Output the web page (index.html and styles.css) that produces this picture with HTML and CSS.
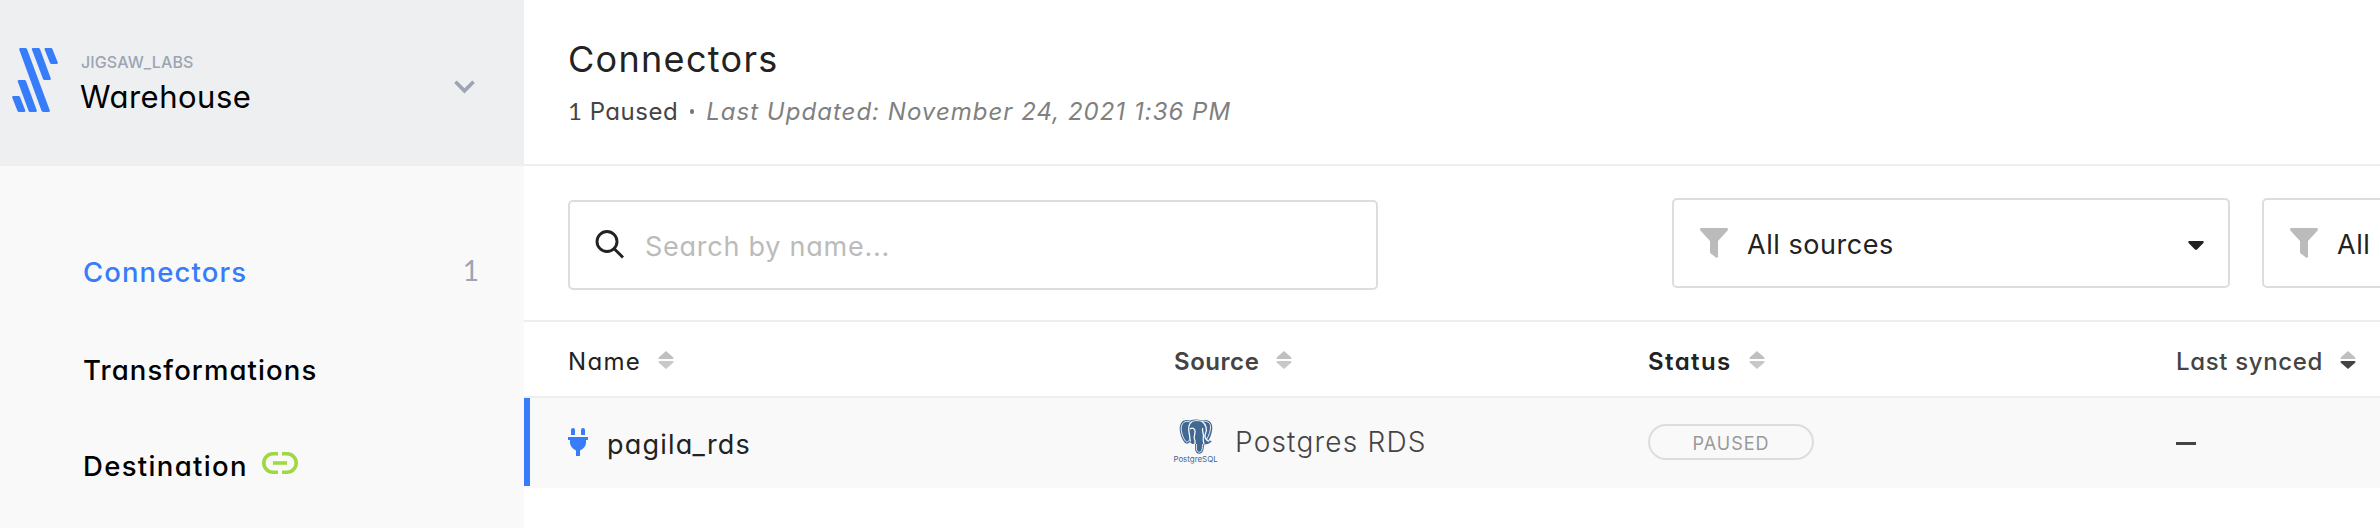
FILE: index.html
```html
<!DOCTYPE html>
<html lang="en">
<head>
<meta charset="utf-8">
<title>Connectors</title>
<link rel="stylesheet" href="styles.css">
</head>
<body>
<svg class="defs" width="0" height="0">
  <symbol id="sort" viewBox="0 0 16 18"><path class="up" d="M8 0 L15.4 6.4 Q16 8 14.5 8 H1.5 Q0 8 .6 6.4Z"/><path class="down" d="M8 18 L15.4 11.600 Q16 10 14.5 10 H1.5 Q0 10 .6 11.600Z"/></symbol>
  <symbol id="funnel" viewBox="0 0 28 30"><path d="M1 0H27Q28.6 .8 27.6 2.4L18 13V29Q17.4 30.4 16 29.4L10.6 25.4Q10 25 10 24V13L.4 2.4Q-.6 .8 1 0Z"/></symbol>
</svg>
<div class="app">
  <aside class="sidebar">
    <div class="account">
      <svg class="logo" viewBox="0 0 46 64"><path d="M8 0H14L15 1L38 63L37 64H31L29.6 63L7 1Z M20.5 0H27L28 1L39 31L38 32H32L31 31L19.7 1Z M33 0H39.5L40.4 1L46 15L45 16H39L38 15L32.4 1Z M6.5 32H13L14 33L25 63L24 64H17.5L16.6 63L5.6 33Z M1 48H7L8 49L13.5 63L12.5 64H6.5L5.5 63L0 49Z"/></svg>
      <div class="account-text">
        <div class="org">JIGSAW_LABS</div>
        <div class="dest">Warehouse</div>
      </div>
      <svg class="chevron" viewBox="0 0 22 14"><path d="M1.5 1.5L11 11L20.5 1.5"/></svg>
    </div>
    <nav class="nav">
      <a class="nav-item active"><span>Connectors</span><span class="count">1</span></a>
      <a class="nav-item"><span>Transformations</span></a>
      <a class="nav-item last"><span>Destination</span>
        <svg class="link" viewBox="0 0 36 22"><path d="M16 1.8H11A9.2 9.2 0 0 0 11 20.2H16M20 1.8H25A9.2 9.2 0 0 1 25 20.2H20M11 11H25"/></svg>
      </a>
    </nav>
  </aside>
  <main class="main">
    <header class="head">
      <h1>Connectors</h1>
      <div class="sub"><span class="paused-count"><span class="one">1</span> Paused</span><i class="dot"></i><em>Last Updated: November 24, 2021 1:36 PM</em></div>
    </header>
    <div class="toolbar">
      <div class="search">
        <svg class="glass" viewBox="0 0 29 29"><circle cx="12" cy="11.5" r="10"/><path d="M19 18.5L28 27.500"/></svg>
        <span>Search by name...</span>
      </div>
      <div class="select"><svg class="funnel"><use href="#funnel"/></svg><span>All sources</span><svg class="caret" viewBox="0 0 16 9"><path d="M1 0H15Q16.5 .6 15.4 2L9 8.5Q8 9.4 7 8.5L.6 2Q-.5 .6 1 0Z"/></svg></div>
      <div class="select second"><svg class="funnel"><use href="#funnel"/></svg><span>All</span></div>
    </div>
    <div class="row thead">
      <div class="c h1c"><span>Name</span><svg class="sort"><use href="#sort"/></svg></div>
      <div class="c h2c"><span>Source</span><svg class="sort"><use href="#sort"/></svg></div>
      <div class="c h3c"><span>Status</span><svg class="sort"><use href="#sort"/></svg></div>
      <div class="c h4c"><span>Last synced</span><svg class="sort sorted"><use href="#sort"/></svg></div>
    </div>
    <div class="row item">
      <div class="c name"><svg class="plug" viewBox="0 0 20 28"><path d="M3 7V2Q3 0 5 0T7 2V7ZM13 7V2Q13 0 15 0T17 2V7ZM0 9H20V12H18V15Q17.6 20 12 22.4V28H8V22.4Q2.4 20 2 15V12H0Z"/></svg><span>pagila_rds</span></div>
      <div class="c source">
        <div class="pg">
          <svg viewBox="0 0 34 36">
            <path class="body" d="M11 1.500C5 -.500 .500 3 .700 10C1 16 4 23 7 24.500C9 25 10 24 11 23L12 24C13 25.500 15 25 16 24.500V30C16.500 34 19 35.500 21.500 34.500C24.500 33.500 25 29 25 25.500C28 25.500 31 24.500 33 22L29.500 21.500C32 17 34 11 33 6C31.500 1.500 27 0 23 1.500C19 0 15 0 11 1.500Z"/>
            <path class="crease" d="M13 2.500C9 5 9.500 12 10.500 16C11 19 10.500 20 11.500 22.500M23 2.500C27 5 29 11 26 16C25.500 19 26.500 20.500 30 22.500M11 10C13 8.500 16 9 16 12C16.500 16 13.500 18 16 22V25M24 9C22.500 10.500 24 13 24.500 16C24 19 24 22 25 25"/>
            <path class="rim" d="M11 3C6 1 2 4 2.200 10C2.500 15 5 21.500 7.500 23C8.500 23 9.500 22 10.500 21M13 2.500C16 1.300 20 1.300 23 2.500C27 1.500 30.500 3 31.500 6.500C32 11 30 16.500 27.500 20.500M17.400 25V30C18 33 20 33.700 21.500 33C23.200 32 23.600 28 23.700 25"/>
          </svg>
          <span>PostgreSQL</span>
        </div>
        <span class="source-name">Postgres RDS</span>
      </div>
      <div class="c status"><span class="pill">PAUSED</span></div>
      <div class="c synced"><i class="dash"></i></div>
    </div>
  </main>
</div>
</body>
</html>
```
FILE: styles.css
```css
* { box-sizing: border-box; }
body {
  margin: 0;
  background: #fff;
  color: #222;
  font-family: Inter, Lato, sans-serif;
  font-feature-settings: "cv11" 1, "calt" 0;
  font-size: 26px;
  overflow: hidden;
}
svg { display: block; flex: none; overflow: visible; }
.defs { display: none; }
span, em, h1 { white-space: nowrap; }
.app { display: flex; width: 2380px; height: 528px; overflow: hidden; }

.sidebar { width: 524px; flex: none; background: #f9f9f9; }
.account { display: flex; height: 166px; padding: 48px 0 0 12px; background: #eeeff1; }
.logo { width: 46px; height: 64px; fill: #377dfa; }
.account-text { width: 373px; margin-left: 23px; }
.org { height: 30px; line-height: 29px; font-size: 16px; font-weight: 500; color: #9ba5b3; letter-spacing: .1px; }
.dest { height: 40px; margin-left: -1px; line-height: 38px; font-size: 31px; color: #000; letter-spacing: .5px; }
.chevron { width: 21px; height: 14px; margin-top: 32px; fill: none; stroke: #9ba5b3; stroke-width: 3.8; }
.nav { padding: 57px 45px 0 83px; }
.nav-item { display: flex; align-items: center; height: 98px; font-size: 27.5px; font-weight: 500; color: #000; letter-spacing: 1.1px; }
.nav-item.last { height: 94px; letter-spacing: 1.35px; }
.active { color: #377dfa; }
.count { margin: -4px 0 0 auto; font-family: Lato, sans-serif; font-size: 28px; font-weight: 400; color: #9ba5b3; letter-spacing: 0; }
.link { width: 36px; height: 22px; margin: -6px 0 0 14px; fill: none; stroke: #a0d840; stroke-width: 3.6; }

.main { flex: 1; min-width: 0; }
.head { height: 166px; padding: 35px 0 0 44px; border-bottom: 2px solid #eee; }
h1 { margin: 0; height: 48px; line-height: 48px; font-size: 36px; font-weight: 400; letter-spacing: 1.3px; }
.sub { display: flex; align-items: center; height: 32px; margin-top: 12px; font-size: 24px; }
.paused-count { color: #444; letter-spacing: .5px; }
.one { font-family: Lato, sans-serif; }
.dot { width: 4px; height: 5px; margin: 0 12px 0 12px; border-radius: 2px; background: #777; }
em { color: #808080; letter-spacing: 1.02px; }

.toolbar { display: flex; height: 156px; padding: 32px 0 0 44px; border-bottom: 2px solid #eee; }
.search, .select { display: flex; align-items: center; height: 90px; border: 2px solid #ddd; border-radius: 5px; flex: none; }
.search { width: 810px; margin-top: 2px; padding-left: 25px; color: #bbb; font-size: 27px; letter-spacing: .75px; }
.search span { margin: 2px 0 0 21px; }
.glass { width: 29px; height: 29px; margin-top: -2px; fill: none; stroke: #222; stroke-width: 2.9; }
.select { width: 558px; margin-left: 294px; padding: 0 24px 0 26px; font-size: 27px; letter-spacing: .55px; }
.select.second { margin-left: 32px; }
.select span { margin: 2px 0 0 19px; }
.funnel { width: 28px; height: 30px; fill: #bbb; }
.caret { width: 16px; height: 9px; margin: 5px 0 0 auto; fill: #222; }

.row { display: grid; grid-template-columns: 606px 474px 528px 204px; padding-left: 44px; }
.c { display: flex; align-items: center; }
.thead { height: 76px; border-bottom: 2px solid #eee; font-size: 24px; }
.thead span { margin-top: 4px; }
.h1c { letter-spacing: 1.3px; }
.h2c { color: #444; font-weight: 600; letter-spacing: .55px; }
.h3c { font-weight: 600; letter-spacing: 1.4px; }
.h4c { color: #444; font-weight: 500; letter-spacing: .65px; }
.sort { width: 16px; height: 18px; margin: 2px 0 0 17px; }
.up { fill: #c0c0c0; }
.down { fill: var(--down, #c8c8c8); }
.sorted { --down: #444; }
.item { height: 90px; background: linear-gradient(#377dfa, #377dfa) 0 0 / 6px 88px no-repeat #f9f9f9; font-size: 27px; }
.plug { width: 20px; height: 28px; margin-top: -2px; fill: #377dfa; }
.name span { margin: 3px 0 0 19px; letter-spacing: 1.2px; }
.pg { display: flex; flex-direction: column; align-items: center; width: 43px; height: 44px; margin: -4px 0 0 0; color: #416892; font-size: 7.9px; line-height: 8px; }
.pg svg { width: 34px; height: 36px; }
.body { fill: #416892; }
.crease, .rim { fill: none; stroke: #f9f9f9; stroke-width: 1.3; }
.rim { stroke-width: .9; }
.source-name { margin: -2px 0 0 18px; color: #444; font-size: 28px; font-weight: 300; letter-spacing: 1.2px; }
.pill { width: 166px; height: 36px; margin: -2px 0 0 0; border: 2px solid #ddd; border-radius: 18px; font-size: 18px; line-height: 35px; text-align: center; color: #999; letter-spacing: 1px; }
.dash { width: 20px; height: 3px; margin-top: 1px; background: #444; }
```
